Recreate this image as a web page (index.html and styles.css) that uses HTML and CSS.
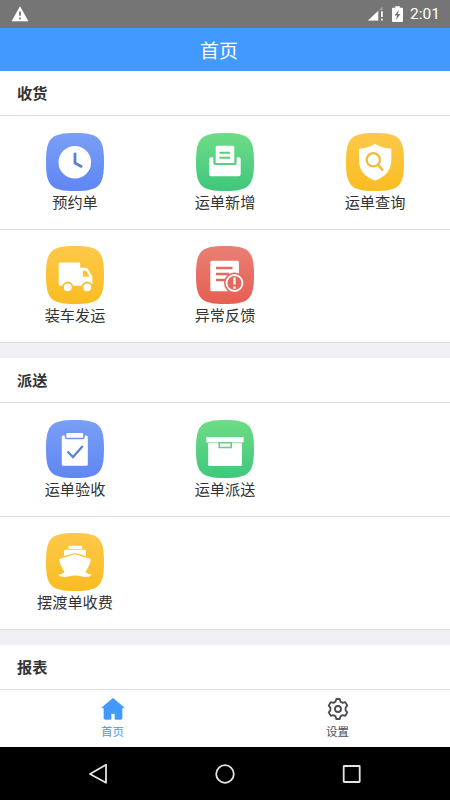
FILE: index.html
```html
<!DOCTYPE html>
<html lang="zh-CN">
<head>
<meta charset="utf-8">
<title>首页</title>
<link rel="stylesheet" href="styles.css">
</head>
<body>
<svg class="defs" width="0" height="0" aria-hidden="true">
  <defs>
    <linearGradient id="blue" x1="0" y1="0" x2="0" y2="1"><stop offset="0" stop-color="#7a9ff6"/><stop offset="1" stop-color="#5f86f4"/></linearGradient>
    <linearGradient id="green" x1="0" y1="0" x2="0" y2="1"><stop offset="0" stop-color="#6fdc86"/><stop offset="1" stop-color="#3fc77d"/></linearGradient>
    <linearGradient id="yellow" x1="0" y1="0" x2="0" y2="1"><stop offset="0" stop-color="#fec849"/><stop offset="1" stop-color="#f9bd22"/></linearGradient>
    <linearGradient id="red" x1="0" y1="0" x2="0" y2="1"><stop offset="0" stop-color="#e97f74"/><stop offset="1" stop-color="#e75e52"/></linearGradient>
    <path id="tile" d="M29 0C53 0 58 5 58 29S53 58 29 58S0 53 0 29S5 0 29 0Z"/>
  </defs>
</svg>
<div class="phone">
  <div class="status">
    <svg class="warn" width="18" height="16" viewBox="0 0 18 16"><path d="M9 .8 17 15H1Z" fill="#fff" stroke="#fff" stroke-width=".6"/><path d="M9 5.5v4.2M9 11.4v1.8" stroke="#757575" stroke-width="1.8"/></svg>
    <svg class="signal" width="16" height="16" viewBox="0 0 17 16"><path d="M0 15 15.5 0V3.8H11.5V15Z" fill="#a4a4a4"/><path d="M0 15 10.500 5V15Z" fill="#fff"/><path d="M14.800 5v6.3M14.800 13v2" stroke="#fff" stroke-width="1.8"/></svg>
    <svg class="battery" width="11" height="17" viewBox="0 0 11 17"><path d="M3.2.3h4.6v1.5H10a1 1 0 0 1 1 1V15a1 1 0 0 1-1 1H1a1 1 0 0 1-1-1V2.800a1 1 0 0 1 1-1h2.200Z" fill="#fff"/><path d="M6.700 4 2.500 9.600h2.500L4.200 13.800 8.500 8H6Z" fill="#757575"/></svg>
    <span class="time">2:01</span>
  </div>
  <header class="header">首页</header>
  <main class="content">
    <section class="group">
      <h2 class="title">收货</h2>
      <div class="row first">
        <div class="item">
          <svg class="icon" viewBox="0 0 58 58"><use href="#tile" fill="url(#blue)"/><circle cx="28.800" cy="29.300" r="16.300" fill="#fff"/><path d="M29 21v9l6.200 3.400" fill="none" stroke="#5b80d8" stroke-width="2.800" stroke-linecap="round" stroke-linejoin="round"/></svg>
          <span class="label">预约单</span>
        </div>
        <div class="item">
          <svg class="icon" viewBox="0 0 58 58"><use href="#tile" fill="url(#green)"/><path d="M15 24.300h2.300V30q0 2 2 2h19.400q2 0 2-2v-5.700H43q1.700 0 1.700 1.700v15.600q0 1.700-1.700 1.700H15q-1.700 0-1.700-1.700V26q0-1.700 1.700-1.700Z" fill="#fff"/><path d="M21.200 12.700h15.600q1.500 0 1.500 1.500V30H19.700V14.200q0-1.500 1.500-1.500Z" fill="#fff"/><path d="M23.500 19.700h10.700M23.500 24.800h10.700" stroke="#5ccd7c" stroke-width="2"/></svg>
          <span class="label">运单新增</span>
        </div>
        <div class="item">
          <svg class="icon" viewBox="0 0 58 58"><use href="#tile" fill="url(#yellow)"/><path d="M29 10.700Q36 15.300 45.300 15.800V27C45.300 37 40 43.500 29 47.500C18 43.500 13 37 13 27V15.800Q22 15.300 29 10.700Z" fill="#fff"/><circle cx="27.300" cy="26.800" r="6.600" fill="none" stroke="#eebc43" stroke-width="2.300"/><path d="m32 31.600 4.200 5" stroke="#eebc43" stroke-width="2.500" stroke-linecap="round"/></svg>
          <span class="label">运单查询</span>
        </div>
      </div>
      <div class="row">
        <div class="item">
          <svg class="icon" viewBox="0 0 58 58"><use href="#tile" fill="url(#yellow)"/><path d="M14 16.500h19q1.200 0 1.200 1.200v4H40q1.200 0 1.800 1l4.300 7.500q.3.600.3 1.300v6.800q0 1.500-1.500 1.500H14q-1.300 0-1.300-1.300V17.800q0-1.300 1.300-1.300Z" fill="#fff"/><path d="M37 24.700h3.300l3.100 6H37Z" fill="#fbc338"/><g fill="#fff" stroke="#f9c034" stroke-width="1.800"><circle cx="21.700" cy="41.300" r="4.800"/><circle cx="41.200" cy="41.300" r="4.800"/></g></svg>
          <span class="label">装车发运</span>
        </div>
        <div class="item">
          <svg class="icon" viewBox="0 0 58 58"><use href="#tile" fill="url(#red)"/><rect x="14.300" y="14.700" width="28.600" height="30.500" rx="1.500" fill="#fff"/><path d="M20 22h16.500M20 28h13M20 34h9" stroke="#e56a60" stroke-width="2.300"/><circle cx="38.500" cy="37" r="10.500" fill="#e7675c"/><circle cx="38.500" cy="37" r="8" fill="none" stroke="#fff" stroke-width="1.800"/><path d="M38.500 31.500v7M38.500 40.400v2.300" stroke="#fff" stroke-width="2.300"/></svg>
          <span class="label">异常反馈</span>
        </div>
      </div>
    </section>
    <section class="group">
      <h2 class="title">派送</h2>
      <div class="row first">
        <div class="item">
          <svg class="icon" viewBox="0 0 58 58"><use href="#tile" fill="url(#blue)"/><rect x="15.800" y="15.500" width="26" height="30.300" rx="1.500" fill="#fff"/><rect x="19.500" y="12.300" width="18.500" height="6.200" rx="1.500" fill="#fff" stroke="#7195f3" stroke-width="1.600"/><path d="m21.500 31.500 5.500 5.600 9.800-11" fill="none" stroke="#5c82dd" stroke-width="2.300"/></svg>
          <span class="label">运单验收</span>
        </div>
        <div class="item">
          <svg class="icon" viewBox="0 0 58 58"><use href="#tile" fill="url(#green)"/><rect x="10.200" y="17" width="37.400" height="5.400" rx="1" fill="#fff"/><path d="M12.200 23.200h33.700v21.500q0 1.300-1.300 1.300H13.500q-1.300 0-1.300-1.300Z" fill="#fff"/><path d="M23.200 22.800v4.700h12v-4.700Z" fill="#fff" stroke="#5fd081" stroke-width="1.600"/></svg>
          <span class="label">运单派送</span>
        </div>
      </div>
      <div class="row">
        <div class="item">
          <svg class="icon" viewBox="0 0 58 58"><use href="#tile" fill="url(#yellow)"/><g fill="#fff"><rect x="22.500" y="12.800" width="13.700" height="3.300" rx="1"/><path d="M20 16.800h18.500q1.500 0 1.500 1.500v4.800L29 20l-11 3.100v-4.800q0-1.500 2-1.500Z"/><path d="M29 21.300 44 25.700q1 .4.800 1.300C43.800 31.500 42 35 39.500 39Q42 41.500 46 41.500Q43 45 37 43.800Q33 42.500 29 42.500T21 43.800Q15 45 12 41.500Q16 41.500 18.500 39C16 35 14.200 31.500 13.200 27q-.2-.9.800-1.300Z"/></g></svg>
          <span class="label">摆渡单收费</span>
        </div>
      </div>
    </section>
    <section class="group">
      <h2 class="title">报表</h2>
    </section>
  </main>
  <nav class="tabs">
    <div class="tab active">
      <svg width="24" height="24" viewBox="0 0 24 24"><path d="M12 1.300 23.300 10.800H21V21.300q0 1-1 1H14V16.500H10v5.800H4q-1 0-1-1V10.800H.7Z" fill="#4299ff" stroke="#4299ff" stroke-width=".7" stroke-linejoin="round"/></svg>
      <span>首页</span>
    </div>
    <div class="tab">
      <svg width="24" height="24" viewBox="0 0 24 24"><path d="M10.300 2h3.400l.7 2.600 2.300 1.300L19.300 5.200 21.300 8.600 19.600 10.600V13.400L21.300 15.400 19.300 18.800 16.700 18.100 14.400 19.400 13.700 22H10.300L9.600 19.400 7.300 18.100 4.700 18.800 2.700 15.400 4.400 13.400V10.600L2.700 8.600 4.700 5.200 7.300 5.900 9.600 4.600Z" fill="none" stroke="#4b4c4f" stroke-width="1.800" stroke-linejoin="round"/><circle cx="12" cy="12" r="3" fill="none" stroke="#4b4c4f" stroke-width="1.800"/></svg>
      <span>设置</span>
    </div>
  </nav>
  <div class="sysnav">
    <svg viewBox="0 0 24 24"><path d="M19 2.800v18L3 12Z"/></svg>
    <svg viewBox="0 0 24 24"><circle cx="12" cy="12" r="8.800"/></svg>
    <svg viewBox="0 0 24 24"><rect x="5.700" y="4" width="16" height="16" rx=".5"/></svg>
  </div>
</div>
</body>
</html>
```
FILE: styles.css
```css
* { box-sizing: border-box; }

body {
  margin: 0;
  font-family: "Noto Sans CJK SC", sans-serif;
  color: #333;
  background: #fff;
}

.defs { display: block; }

.phone {
  display: flex;
  flex-direction: column;
  width: 450px;
  height: 800px;
  overflow: hidden;
}

.status {
  display: flex;
  align-items: center;
  flex: none;
  height: 28px;
  padding: 0 10px 0 11px;
  background: #757575;
  color: #fff;
}

.signal { margin-left: auto; }
.battery { margin-left: 8px; }

.time {
  margin-left: 7px;
  font: 400 15.500px/28px Roboto, sans-serif;
}

.header {
  flex: none;
  height: 43px;
  padding-right: 12px;
  background: #4299ff;
  color: #fff;
  font-size: 19px;
  line-height: 43px;
  text-align: center;
}

.content {
  flex: none;
  height: 619px;
  background: #efeff4;
}

.group {
  margin-bottom: 15px;
  background: #fff;
}

.title {
  height: 45px;
  margin: 0;
  padding-left: 17px;
  border-bottom: 1px solid #dcdcde;
  font-size: 15.2px;
  font-weight: 700;
  line-height: 43px;
}

.row {
  display: grid;
  grid-template-columns: repeat(3, 1fr);
  height: 113px;
  padding-top: 16px;
  border-bottom: 1px solid #dcdcde;
}

.row.first {
  height: 114px;
  padding-top: 16.500px;
}

.item {
  display: flex;
  flex-direction: column;
  align-items: center;
}

.icon {
  flex: none;
  width: 58px;
  height: 58px;
}

.label {
  font-size: 15.200px;
  line-height: 20px;
}

.tabs {
  display: flex;
  flex: none;
  height: 57px;
  background: #fff;
}

.tab {
  display: flex;
  flex: 1;
  flex-direction: column;
  align-items: center;
  padding-top: 7px;
  color: #4b4f55;
  font-size: 11.500px;
  line-height: 20px;
}

.tab.active { color: #4299ff; }

.sysnav {
  display: flex;
  flex: none;
  align-items: center;
  justify-content: space-between;
  height: 53px;
  padding: 0 88px 0 87px;
  background: #000;
}

.sysnav svg {
  width: 24px;
  height: 24px;
  fill: none;
  stroke: #e4e4e4;
  stroke-width: 1.800;
  stroke-linejoin: round;
}
```
